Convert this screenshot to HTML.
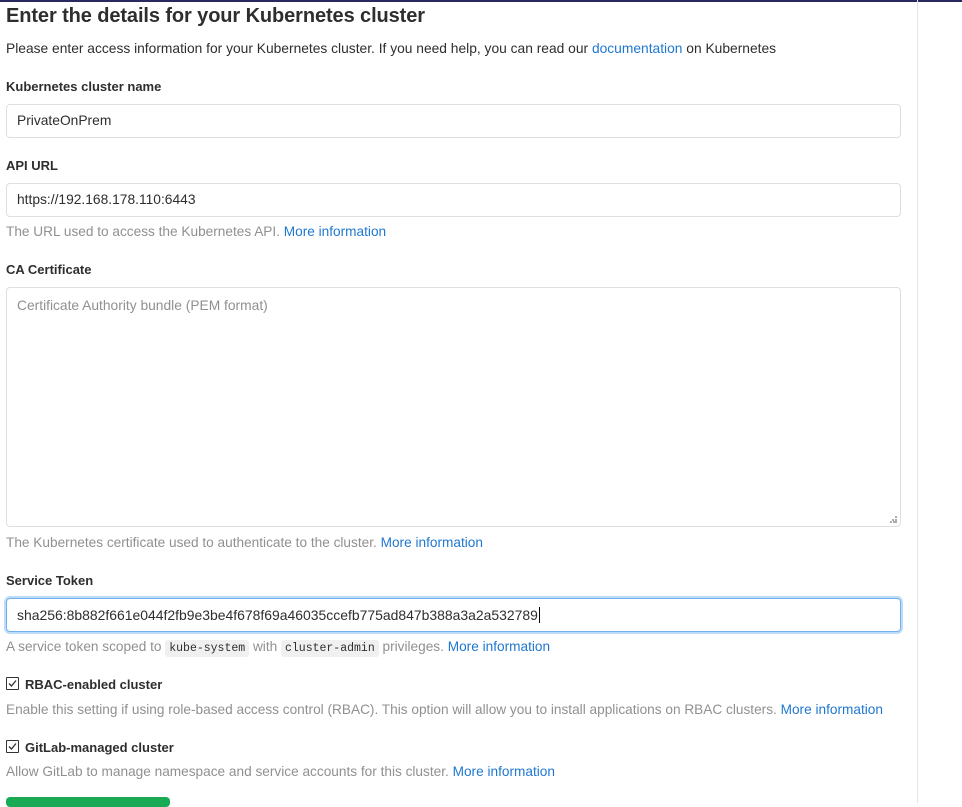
<!DOCTYPE html>
<html><head><meta charset="utf-8"><style>
body{margin:0;width:962px;height:803px;overflow:hidden;background:#fff;font-family:"Liberation Sans",sans-serif;color:#2e2e2e;position:relative}
.a{position:absolute;white-space:nowrap}
.t{left:6px;top:5px;font-size:20px;font-weight:bold;color:#2e2e2e;letter-spacing:-0.1px}
.p{font-size:13.8px;color:#2e2e2e;left:6px}
.l{font-size:13px;font-weight:bold;left:6px;color:#2e2e2e}
.h{font-size:13.65px;color:#909090;left:6px}
a{color:#1f78d1;text-decoration:none}
.in{left:6px;width:893px;height:32px;border:1px solid #dfdfdf;border-radius:4px;font-size:13.8px;line-height:32px;text-indent:10px;color:#2e2e2e}
code{font-family:"Liberation Mono",monospace;font-size:11.5px;background:#f0f0f0;color:#2e2e2e;padding:2px 4px;border-radius:3px}
.cb{display:inline-block;width:11px;height:11px;border:1px solid #333;vertical-align:-1px;margin-right:6px;position:relative;border-radius:1px}
</style></head><body>
<div style="position:absolute;left:0;top:0;width:962px;height:2px;background:#292961"></div>
<div style="position:absolute;left:917px;top:0;width:1px;height:803px;background:#e5e5e5"></div>
<div class="a t">Enter the details for your Kubernetes cluster</div>
<div class="a p" style="top:41px">Please enter access information for your Kubernetes cluster. If you need help, you can read our <a>documentation</a> on Kubernetes</div>
<div class="a l" style="top:79px">Kubernetes cluster name</div>
<div class="a in" style="top:104px">PrivateOnPrem</div>
<div class="a l" style="top:158px">API URL</div>
<div class="a in" style="top:183px">https://192.168.178.110:6443</div>
<div class="a h" style="top:224px">The URL used to access the Kubernetes API. <a>More information</a></div>
<div class="a l" style="top:262px">CA Certificate</div>
<div class="a in" style="top:287px;height:238px;line-height:normal;text-indent:0;padding:0;color:#909090"><div style="padding:10px 10px">Certificate Authority bundle (PEM format)</div>
<svg style="position:absolute;right:3px;bottom:3px" width="7" height="7"><g fill="#aaa"><rect x="5" y="0" width="2" height="2"/><rect x="2" y="3" width="2" height="2"/><rect x="5" y="3" width="2" height="2"/><rect x="0" y="5" width="2" height="2"/><rect x="3" y="5" width="2" height="2"/><rect x="5" y="5" width="2" height="2"/></g></svg></div>
<div class="a h" style="top:535px">The Kubernetes certificate used to authenticate to the cluster. <a>More information</a></div>
<div class="a l" style="top:573px">Service Token</div>
<div class="a in" style="top:598px;border-color:#73afea;box-shadow:0 0 0 2px #bcdcfa;font-size:13.95px">sha256:8b882f661e044f2fb9e3be4f678f69a46035ccefb775ad847b388a3a2a532789<span style="border-left:1px solid #000;margin-left:1px"></span></div>
<div class="a h" style="top:639px">A service token scoped to <code>kube-system</code> with <code>cluster-admin</code> privileges. <a>More information</a></div>
<div class="a l" style="top:677px"><span class="cb"><svg style="position:absolute;left:1px;top:1px" width="9" height="9"><path d="M1 4.5 L3.5 7 L8 1.5" stroke="#333" stroke-width="1.3" fill="none"/></svg></span>RBAC-enabled cluster</div>
<div class="a h" style="top:702px">Enable this setting if using role-based access control (RBAC). This option will allow you to install applications on RBAC clusters. <a>More information</a></div>
<div class="a l" style="top:740px"><span class="cb"><svg style="position:absolute;left:1px;top:1px" width="9" height="9"><path d="M1 4.5 L3.5 7 L8 1.5" stroke="#333" stroke-width="1.3" fill="none"/></svg></span>GitLab-managed cluster</div>
<div class="a h" style="top:764px">Allow GitLab to manage namespace and service accounts for this cluster. <a>More information</a></div>
<div style="position:absolute;left:6px;top:797px;width:164px;height:10px;background:#1aaa55;border-radius:4px"></div>
</body></html>
